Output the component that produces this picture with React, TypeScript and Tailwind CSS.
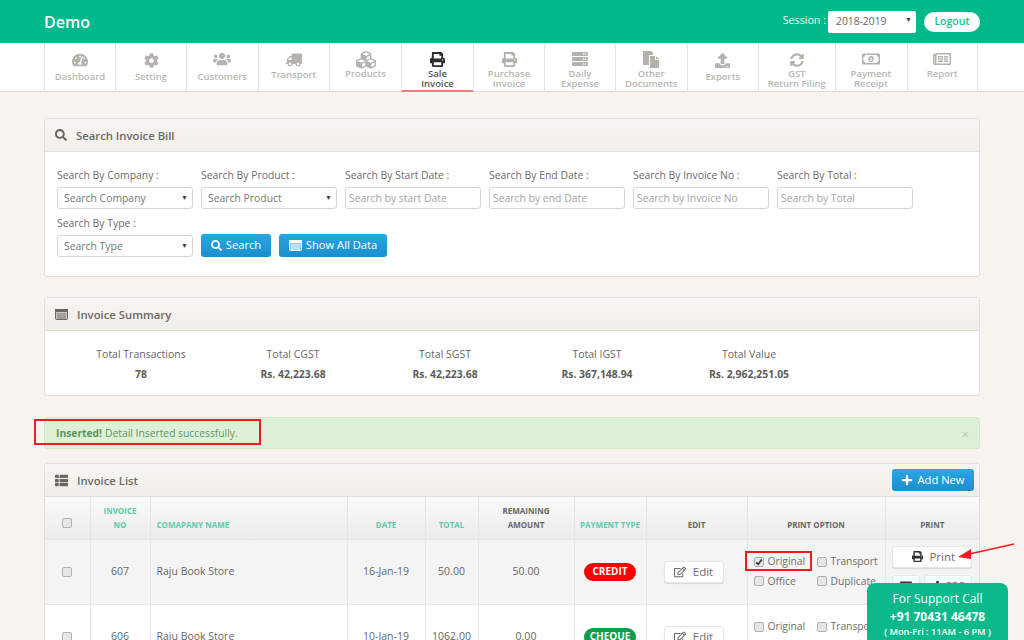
import type { ReactNode } from "react";
import {
  FaCog,
  FaCubes,
  FaDownload,
  FaEnvelope,
  FaPlus,
  FaPrint,
  FaRegEdit,
  FaRegMoneyBillAlt,
  FaRegNewspaper,
  FaSearch,
  FaServer,
  FaSyncAlt,
  FaTachometerAlt,
  FaThList,
  FaTruck,
  FaUpload,
  FaUsers,
} from "react-icons/fa";

function FilesIcon() {
  return (
    <svg viewBox="0 0 16 17" className="h-[17px] w-[16px]" fill="currentColor">
      <path d="M0 0h8l2 2v2H6v10H0z" />
      <path d="M7 5h5v4h4v8H7z" />
      <path d="M13 5l3 3h-3z" />
    </svg>
  );
}

// panel header icon: a window with a dark title bar and text lines
function ListWindowIcon({ light }: { light?: boolean }) {
  return (
    <svg viewBox="0 0 13 11" className="h-[11px] w-[13px]">
      <rect x="0.5" y="0.5" width="12" height="10" rx="1" fill={light ? "#8fcdf0" : "#c9c6c1"} stroke="currentColor" />
      <rect x="0" y="0" width="13" height="3" fill="currentColor" />
      <path d="M2 5h9M2 7h9M2 9h9" stroke="currentColor" strokeWidth="0.8" />
    </svg>
  );
}

const NAV = [
  { label: ["Dashboard"], icon: <FaTachometerAlt size={16} />, w: "w-[71px]", top: "pt-[9px]", gap: "mt-[4px]" },
  { label: ["Setting"], icon: <FaCog size={15} />, w: "w-[71px]", top: "pt-[9px]", gap: "mt-[4px]" },
  { label: ["Customers"], icon: <FaUsers size={18} />, w: "w-[71.5px]", top: "pt-[8px]", gap: "mt-[5px]" },
  { label: ["Transport"], icon: <FaTruck size={16} className="-scale-x-100" />, w: "w-[71.5px]", top: "pt-[9px]", gap: "mt-[2px]" },
  { label: ["Products"], icon: <FaCubes size={20} />, w: "w-[72px]", top: "pt-[9px]", gap: "mt-[1px]" },
  { label: ["Sale", "Invoice"], icon: <FaPrint size={15} />, w: "w-[72px]", top: "pt-[8px]", gap: "mt-[2px]", active: true },
  { label: ["Purchase", "Invoice"], icon: <FaPrint size={15} />, w: "w-[71px]", top: "pt-[8px]", gap: "mt-[2px]" },
  { label: ["Daily", "Expense"], icon: <FaServer size={16} />, w: "w-[71px]", top: "pt-[8px]", gap: "mt-[2px]" },
  { label: ["Other", "Documents"], icon: <FilesIcon />, w: "w-[71.5px]", top: "pt-[8px]", gap: "mt-[2px]" },
  { label: ["Exports"], icon: <FaUpload size={15} />, w: "w-[71.5px]", top: "pt-[9px]", gap: "mt-[4px]" },
  { label: ["GST", "Return Filing"], icon: <FaSyncAlt size={14} />, w: "w-[76.5px]", top: "pt-[9px]", gap: "mt-[1px]" },
  { label: ["Payment", "Receipt"], icon: <FaRegMoneyBillAlt size={18} />, w: "w-[72px]", top: "pt-[8px]", gap: "mt-[2px]" },
  { label: ["Report"], icon: <FaRegNewspaper size={18} />, w: "w-[71.5px]", top: "pt-[8px]", gap: "mt-[2px]" },
];

const SUMMARY = [
  { label: "Total Transactions", value: "78" },
  { label: "Total CGST", value: "Rs. 42,223.68" },
  { label: "Total SGST", value: "Rs. 42,223.68" },
  { label: "Total IGST", value: "Rs. 367,148.94" },
  { label: "Total Value", value: "Rs. 2,962,251.05" },
];

function Panel({ icon, iconW = "w-[22px]", title, action, children }: { icon: ReactNode; iconW?: string; title: string; action?: ReactNode; children: ReactNode }) {
  return (
    <section className="rounded-[3px] border border-[#e2e0dc] bg-white">
      <header className="flex h-[33px] items-center border-b border-[#dfdedb] bg-gradient-to-b from-[#f7f5f1] to-[#f1efea] pl-[10px] pr-[5px] text-[#6d6a66]">
        <span className={`flex ${iconW} items-center text-[#6a6762]`}>{icon}</span>
        <h2 className="mt-[2px] text-[11.3px] font-semibold leading-none">{title}</h2>
        {action}
      </header>
      {children}
    </section>
  );
}

function Field({ label, children }: { label: string; children: ReactNode }) {
  return (
    <div className="w-[136px]">
      <div className="mb-[3px] text-[10.4px] leading-[18px] text-[#6b6b6b]">{label}</div>
      {children}
    </div>
  );
}

function Select({ text }: { text: string }) {
  return (
    <div className="relative flex h-[22px] w-[136px] items-center rounded-[3px] border border-[#d4d4d4] bg-white pl-[6px] pt-[2px] text-[10.4px] text-[#777]">
      {text}
      <span className="absolute right-[4px] top-[6px] text-[7px] leading-[8px] text-[#444]">▼</span>
    </div>
  );
}

function TextInput({ text }: { text: string }) {
  return (
    <div className="flex h-[22px] w-[136px] items-center rounded-[3px] border border-[#d4d4d4] bg-white pl-[3px] pt-[1px] text-[10.4px] text-[#a5a5a5]">
      {text}
    </div>
  );
}

function BlueButton({ children, className = "" }: { children: ReactNode; className?: string }) {
  return (
    <button className={`flex items-center justify-center gap-[4px] rounded-[3px] bg-gradient-to-b from-[#2aa5e4] to-[#1b8fcd] text-[11.2px] text-white ${className}`}>
      {children}
    </button>
  );
}

function Check({ checked }: { checked?: boolean }) {
  return (
    <span className="flex h-[10px] w-[10px] shrink-0 items-center justify-center rounded-[2px] border border-[#b0b0b0] bg-[#e6e6e6] text-[#333]">
      {checked && (
        <svg viewBox="0 0 10 10" className="h-[8px] w-[8px]">
          <path d="M1.5 5.5 L4 8 L8.5 2" fill="none" stroke="currentColor" strokeWidth="2" />
        </svg>
      )}
    </span>
  );
}

function Opt({ label, checked }: { label: string; checked?: boolean }) {
  return (
    <span className="flex w-[63px] items-center gap-[4px] text-[10.3px] whitespace-nowrap text-[#6f6f6f]">
      <Check checked={checked} />
      {label}
    </span>
  );
}

function PrintOptions({ checked }: { checked?: boolean }) {
  return (
    <div className="flex flex-col gap-[4px]">
      <div className="flex items-center"><Opt label="Original" checked={checked} /><Opt label="Transport" /></div>
      <div className="flex items-center"><Opt label="Office" /><Opt label="Duplicate" /></div>
    </div>
  );
}

function EditButton() {
  return (
    <button className="ml-[17px] flex h-[22px] w-[60px] items-center justify-center gap-[7px] rounded-[3px] border border-[#e6e6e6] bg-white text-[11.5px] text-[#6b6b6b] shadow-[0_1px_1px_rgba(0,0,0,0.12)]">
      <FaRegEdit size={12} />
      Edit
    </button>
  );
}

function Badge({ text, bg }: { text: string; bg: string }) {
  return <span className={`inline-flex h-[18px] w-[52px] items-center justify-center rounded-full ${bg} text-[10px] font-bold text-white`}>{text}</span>;
}

const TH_GREEN = "border-r border-[#e6e6e6] align-bottom pb-[7px] text-[8px] font-bold leading-[14px] text-[#5fc9ad]";
const TH_GREY = "border-r border-[#e6e6e6] align-bottom pb-[7px] text-[8px] font-bold leading-[14px] text-[#666]";
const TD = "border-r border-[#e6e6e6] text-center text-[10.5px] text-[#666]";

export default function App() {
  return (
    <div className="relative h-[640px] w-[1024px] overflow-hidden bg-[#f7f4ef] font-['Open_Sans',sans-serif]">
      <div className="flex h-[43px] items-center bg-[#00b98a] pl-[44px] pr-[44px]">
        <span className="text-[16px] font-semibold text-white">Demo</span>
        <div className="ml-auto flex items-center">
          <span className="mr-[2px] mt-[-3px] text-[10.7px] text-white/90">Session :</span>
          <div className="relative flex h-[22px] w-[88px] items-center rounded-[2px] bg-white pl-[8px] text-[10.3px] text-[#666]">
            2018-2019
            <span className="absolute right-[4px] top-[5px] text-[7px] leading-[8px] text-[#444]">▼</span>
          </div>
          <button className="ml-[8px] h-[20px] w-[56px] rounded-full bg-white text-[10.5px] font-semibold text-[#1bbd97]">Logout</button>
        </div>
      </div>

      <nav className="flex h-[49px] border-b border-[#dedddb] bg-white pl-[44px]">
        {NAV.map((n) => (
          <div
            key={n.label.join(" ")}
            className={`flex ${n.w} flex-col items-center border-l border-[#e4e4e4] ${n.top} text-[9.5px] font-semibold leading-[10px] last:border-r ${n.active ? "-mb-[1px] border-b-2 border-b-[#ee7f7f] text-[#555]" : "text-[#bab7b2]"}`}
          >
            <span className={`flex h-[16px] items-center justify-center ${n.active ? "text-[#2c2c2c]" : "text-[#b5b2ad]"}`}>{n.icon}</span>
            <span className={`${n.gap} whitespace-nowrap text-center`}>
              {n.label.map((l) => (
                <span key={l} className="block">{l}</span>
              ))}
            </span>
          </div>
        ))}
      </nav>

      <main className="flex flex-col px-[44px] pt-[26px]">
        <Panel icon={<FaSearch size={12} />} iconW="w-[21px]" title="Search Invoice Bill">
          <div className="h-[124px] px-[12px] pt-[14px]">
            <div className="flex gap-[8px]">
              <Field label="Search By Company :"><Select text="Search Company" /></Field>
              <Field label="Search By Product :"><Select text="Search Product" /></Field>
              <Field label="Search By Start Date :"><TextInput text="Search by start Date" /></Field>
              <Field label="Search By End Date :"><TextInput text="Search by end Date" /></Field>
              <Field label="Search By Invoice No :"><TextInput text="Search by Invoice No" /></Field>
              <Field label="Search By Total :"><TextInput text="Search by Total" /></Field>
            </div>
            <div className="mt-[5px] flex items-end gap-[8px]">
              <Field label="Search By Type :"><Select text="Search Type" /></Field>
              <BlueButton className="h-[23px] w-[70px]"><FaSearch size={11} />Search</BlueButton>
              <BlueButton className="h-[23px] w-[108px]"><ListWindowIcon light />Show All Data</BlueButton>
            </div>
          </div>
        </Panel>

        <div className="mt-[20px]">
          <Panel icon={<ListWindowIcon />} title="Invoice Summary">
            <div className="flex h-[64px] pl-[20px] pt-[16px]">
              {SUMMARY.map((s) => (
                <div key={s.label} className="w-[152px] text-center text-[#666]">
                  <div className="text-[10.5px] leading-[15px]">{s.label}</div>
                  <div className="mt-[5px] text-[10.4px] font-bold leading-[15px] text-[#5c5c5c]">{s.value}</div>
                </div>
              ))}
            </div>
          </Panel>
        </div>

        <div className="relative mt-[21px] flex h-[32px] items-center rounded-[3px] border border-[#d6e9c6] bg-[#dff0d8] pl-[11px] pr-[10px] pt-[2px] text-[10.3px] text-[#5f9560]">
          <b className="mr-[3px] font-bold">Inserted!</b> Detail Inserted successfully.
          <span className="ml-auto text-[13px] leading-none text-[#b8c4b2]">×</span>
        </div>

        <div className="mt-[14px]">
          <Panel
            icon={<FaThList size={13} />}
            title="Invoice List"
            action={
              <BlueButton className="ml-auto h-[22px] w-[82px] gap-[3px]">
                <FaPlus size={12} />
                Add New
              </BlueButton>
            }
          >
            <table className="w-[934px] table-fixed border-collapse">
              <colgroup>
                <col className="w-[45px]" />
                <col className="w-[60px]" />
                <col className="w-[197px]" />
                <col className="w-[78px]" />
                <col className="w-[53px]" />
                <col className="w-[96px]" />
                <col className="w-[72px]" />
                <col className="w-[101px]" />
                <col className="w-[138px]" />
                <col />
              </colgroup>
              <thead>
                <tr className="h-[42px] bg-gradient-to-b from-[#fafafa] to-[#ececec]">
                  <th className="border-r border-[#e6e6e6] pt-[10px] align-middle"><div className="flex justify-center"><Check /></div></th>
                  <th className={TH_GREEN}>INVOICE<br />NO</th>
                  <th className={`${TH_GREEN} pl-[6px] text-left`}>COMAPANY NAME</th>
                  <th className={TH_GREEN}>DATE</th>
                  <th className={TH_GREEN}>TOTAL</th>
                  <th className={TH_GREY}>REMAINING<br />AMOUNT</th>
                  <th className={TH_GREEN}>PAYMENT TYPE</th>
                  <th className={TH_GREY}>EDIT</th>
                  <th className={TH_GREY}>PRINT OPTION</th>
                  <th className={`${TH_GREY} border-r-0`}>PRINT</th>
                </tr>
              </thead>
              <tbody>
                <tr className="h-[65px] border-b border-t border-[#e6e6e6] bg-[#f4f4f4]">
                  <td className={TD}><div className="flex justify-center"><Check /></div></td>
                  <td className={TD}>607</td>
                  <td className={`${TD} pl-[6px] text-left`}>Raju Book Store</td>
                  <td className={TD}>16-Jan-19</td>
                  <td className={TD}>50.00</td>
                  <td className={TD}>50.00</td>
                  <td className={TD}><Badge text="CREDIT" bg="bg-[#fb0000]" /></td>
                  <td className={TD}><EditButton /></td>
                  <td className={`${TD} pl-[6px]`}><PrintOptions checked /></td>
                  <td className="text-center text-[11px] text-[#666]">
                    <div className="flex flex-col items-center gap-[7px]">
                      <button className="flex h-[22px] w-[80px] items-center justify-center gap-[6px] rounded-[3px] border border-[#e6e6e6] bg-white pl-[3px] text-[11.5px] text-[#6b6b6b] shadow-[0_1px_1px_rgba(0,0,0,0.12)]">
                        <FaPrint size={11} className="text-[#333]" />
                        Print
                      </button>
                      <div className="flex h-[23px] gap-[4px]">
                        <button className="flex w-[28px] items-center justify-center rounded-[3px] border border-[#e6e6e6] bg-white text-[#333]"><FaEnvelope size={12} /></button>
                        <button className="flex w-[48px] items-center justify-center gap-[3px] rounded-[3px] border border-[#e6e6e6] bg-white text-[10px] text-[#777]"><FaDownload size={11} className="text-[#333]" />PDF</button>
                      </div>
                    </div>
                  </td>
                </tr>
                <tr className="h-[65px] bg-white">
                  <td className={TD}><div className="flex justify-center"><Check /></div></td>
                  <td className={TD}>606</td>
                  <td className={`${TD} pl-[6px] text-left`}>Raju Book Store</td>
                  <td className={TD}>10-Jan-19</td>
                  <td className={TD}>1062.00</td>
                  <td className={TD}>0.00</td>
                  <td className={TD}><Badge text="CHEQUE" bg="bg-[#109c4b]" /></td>
                  <td className={TD}><EditButton /></td>
                  <td className={`${TD} pl-[6px]`}><PrintOptions /></td>
                  <td />
                </tr>
              </tbody>
            </table>
          </Panel>
        </div>
      </main>

      {/* annotations and the support box sit over the page */}
      <div className="absolute left-[34px] top-[419px] h-[26px] w-[227px] border-2 border-[#f01c1c]" />
      <div className="absolute left-[745px] top-[551px] h-[20px] w-[67px] border-2 border-[#f01c1c]" />
      <svg className="absolute left-[955px] top-[540px] h-[30px] w-[65px]" viewBox="0 0 65 30">
        <path d="M59 4 L10 15" stroke="#ee1c25" strokeWidth="1.5" fill="none" />
        <path d="M3 17 L16 9 L16 19 Z" fill="#ee1c25" />
      </svg>
      <div className="absolute left-[867px] top-[583px] h-[70px] w-[141px] rounded-[8px] bg-[#0bb98a] pt-[7px] text-center text-white">
        <div className="text-[12px] leading-[18px]">For Support Call</div>
        <div className="text-[12px] font-bold leading-[17px]">+91 70431 46478</div>
        <div className="text-[9.2px] font-semibold leading-[13px]">( Mon-Fri : 11AM - 6 PM )</div>
      </div>
    </div>
  );
}
